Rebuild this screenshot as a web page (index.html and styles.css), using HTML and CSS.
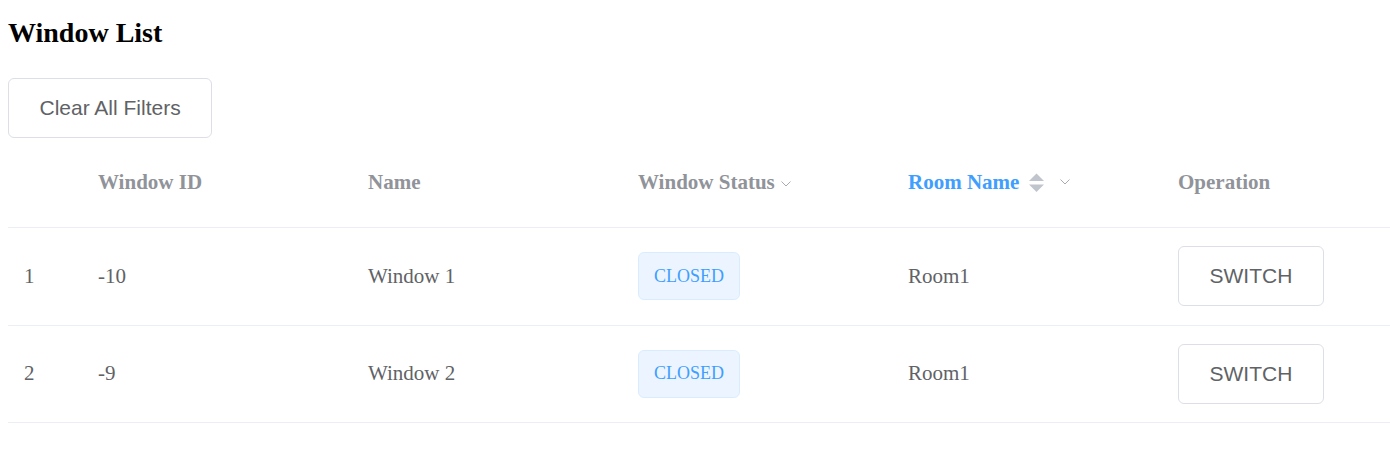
FILE: index.html
```html
<!DOCTYPE html>
<html>
<head>
<meta charset="utf-8">
<link rel="stylesheet" href="styles.css">
</head>
<body>
<div class="page">
  <h2 class="title">Window List</h2>
  <button class="btn btn-clear">Clear All Filters</button>
  <div class="table">
    <div class="row head">
      <div class="cell"></div>
      <div class="cell">Window ID</div>
      <div class="cell">Name</div>
      <div class="cell">Window Status<svg class="chev chev-status" width="10" height="6" viewBox="0 0 10 6"><polyline points="0.5,0.5 5,5 9.5,0.5" fill="none" stroke="#a8abb2" stroke-width="1"/></svg></div>
      <div class="cell active">Room Name<svg class="sort" width="15" height="20" viewBox="0 0 15 20"><polygon points="0,8 7.5,0.5 15,8" fill="#c0c4cc"/><polygon points="0,11.5 15,11.5 7.5,19" fill="#c0c4cc"/></svg><svg class="chev chev-room" width="10" height="6" viewBox="0 0 10 6"><polyline points="0.5,0.5 5,5 9.5,0.5" fill="none" stroke="#a8abb2" stroke-width="1"/></svg></div>
      <div class="cell">Operation</div>
    </div>
    <div class="row body">
      <div class="cell">1</div>
      <div class="cell">-10</div>
      <div class="cell">Window 1</div>
      <div class="cell"><span class="tag">CLOSED</span></div>
      <div class="cell">Room1</div>
      <div class="cell"><button class="btn">SWITCH</button></div>
    </div>
    <div class="row body">
      <div class="cell">2</div>
      <div class="cell">-9</div>
      <div class="cell">Window 2</div>
      <div class="cell"><span class="tag">CLOSED</span></div>
      <div class="cell">Room1</div>
      <div class="cell"><button class="btn">SWITCH</button></div>
    </div>
  </div>
</div>
</body>
</html>
```
FILE: styles.css
```css
html, body {
  margin: 0;
  padding: 0;
  background: #fff;
}
body {
  font-family: "Liberation Serif", "Times New Roman", serif;
}
.page {
  padding: 0 0 0 8px;
}
.title {
  margin: 17px 0 0;
  font-size: 28px;
  line-height: 32px;
  font-weight: bold;
  color: #000;
}
.btn {
  display: inline-flex;
  align-items: center;
  justify-content: center;
  box-sizing: border-box;
  height: 60px;
  padding: 0 30.5px;
  font-family: "Liberation Sans", Arial, sans-serif;
  font-size: 21px;
  color: #606266;
  background: #fff;
  border: 1px solid #dcdfe6;
  border-radius: 6px;
  cursor: pointer;
}
.btn-clear {
  margin-top: 29px;
}
.table {
  display: flex;
  flex-direction: column;
}
.row {
  display: grid;
  grid-template-columns: 74px 270px 270px 270px 270px 1fr;
  border-bottom: 1px solid #ebeef5;
  box-sizing: border-box;
}
.row.head {
  height: 90px;
}
.row.body {
  height: 97.5px;
}
.cell {
  display: flex;
  align-items: center;
  padding-left: 16px;
  font-size: 21px;
  color: #606266;
}
.head .cell {
  font-weight: bold;
  color: #909399;
}
.head .cell.active {
  color: #409eff;
}
.chev-status {
  margin-left: 6px;
  margin-top: 2px;
}
.sort {
  margin-left: 10px;
}
.chev-room {
  margin-left: 16px;
  margin-top: -2px;
}
.tag {
  display: inline-flex;
  align-items: center;
  box-sizing: border-box;
  height: 48px;
  padding: 0 15px;
  font-size: 18px;
  color: #409eff;
  background: #ecf5ff;
  border: 1px solid #d9ecff;
  border-radius: 6px;
}
```
